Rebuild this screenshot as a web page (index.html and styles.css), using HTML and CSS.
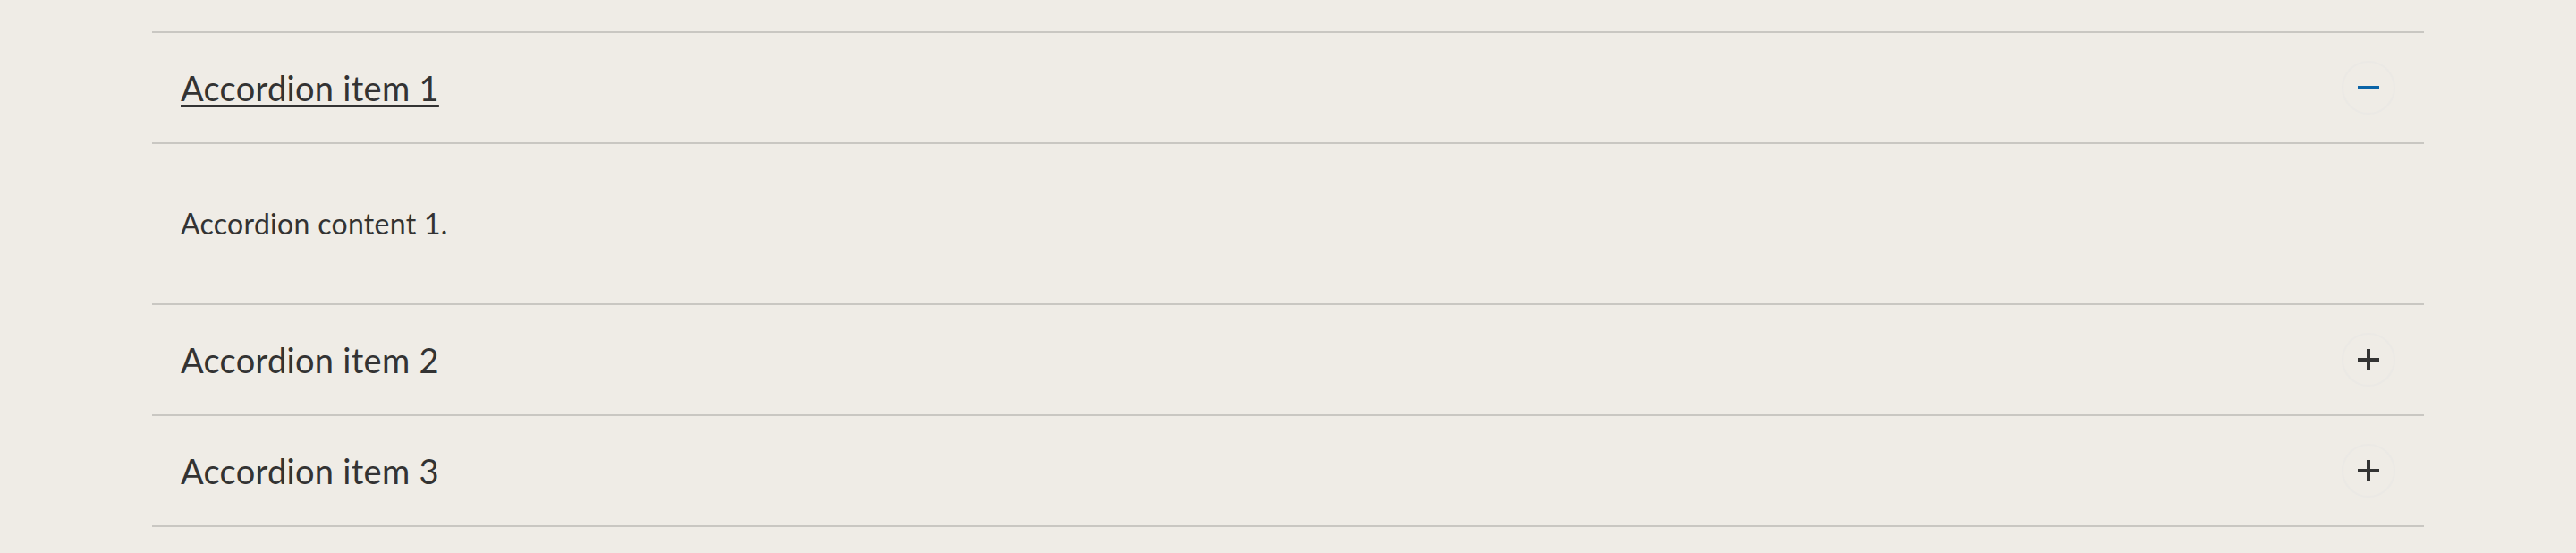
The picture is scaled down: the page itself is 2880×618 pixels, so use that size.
FILE: index.html
```html
<!DOCTYPE html>
<html lang="en">
<head>
    <meta charset="UTF-8">
    <meta name="viewport" content="width=device-width, initial-scale=1.0">
    <title>Accordion</title>
    <link rel="stylesheet" href="styles.css">
</head>
<body>
    <div class="accordion">
        <div class="accordion-item open">
            <button class="accordion-header">
                <span class="accordion-title">Accordion item 1</span>
                <span class="accordion-icon minus">
                    <svg width="24" height="24" viewBox="0 0 24 24"><path d="M0 12h24" stroke="currentColor" stroke-width="4"/></svg>
                </span>
            </button>
            <div class="accordion-panel">
                <p>Accordion content 1.</p>
            </div>
        </div>
        <div class="accordion-item">
            <button class="accordion-header">
                <span class="accordion-title">Accordion item 2</span>
                <span class="accordion-icon">
                    <svg width="24" height="24" viewBox="0 0 24 24"><path d="M0 12h24M12 0v24" stroke="currentColor" stroke-width="4"/></svg>
                </span>
            </button>
        </div>
        <div class="accordion-item">
            <button class="accordion-header">
                <span class="accordion-title">Accordion item 3</span>
                <span class="accordion-icon">
                    <svg width="24" height="24" viewBox="0 0 24 24"><path d="M0 12h24M12 0v24" stroke="currentColor" stroke-width="4"/></svg>
                </span>
            </button>
        </div>
    </div>
</body>
</html>
```

FILE: styles.css
```css
body {
    margin: 0;
    background-color: #efece6;
    font-family: Lato, "Noto Sans", sans-serif;
    color: #333;
}
.accordion {
    padding: 35px 170px 0;
}
.accordion-item {
    border-top: 2px solid #c9c7c2;
}
.accordion-item:last-child {
    border-bottom: 2px solid #c9c7c2;
}
.accordion-header {
    display: flex;
    justify-content: space-between;
    align-items: center;
    width: 100%;
    height: 122px;
    padding: 0 32px;
    border: none;
    background: transparent;
    color: #333;
    font-family: inherit;
    text-align: left;
    cursor: pointer;
}
.accordion-title {
    font-size: 38px;
    letter-spacing: 0.3px;
}
.open .accordion-title {
    text-decoration: underline;
    text-decoration-thickness: 3px;
    text-underline-offset: 4px;
}
.accordion-icon {
    display: flex;
    align-items: center;
    justify-content: center;
    width: 56px;
    height: 56px;
    border: 2px solid #ebe9e5;
    border-radius: 50%;
    color: #333;
}
.accordion-icon.minus {
    color: #0b64a7;
}
.accordion-icon svg {
    display: block;
}
.accordion-panel {
    border-top: 2px solid #c9c7c2;
    padding: 65px 32px;
}
.accordion-panel p {
    margin: 0;
    font-size: 32px;
    line-height: 48px;
    letter-spacing: 0.3px;
}
```
